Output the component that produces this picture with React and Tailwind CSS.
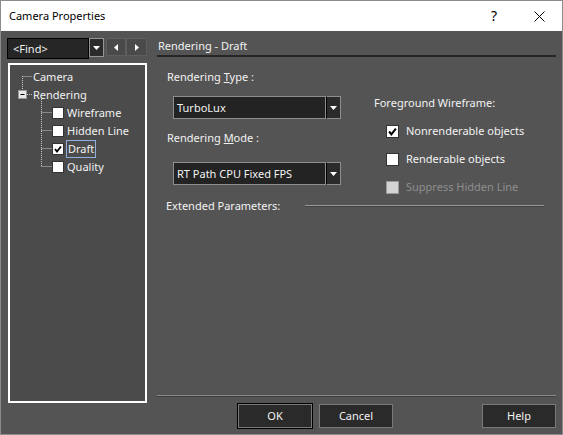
import React from "react";

const font = { fontFamily: "'Noto Sans', 'Open Sans', sans-serif" };

const Check = ({ checked, size = 12, disabled }) => (
  <span
    className={`flex items-center justify-center border ${
      disabled ? "bg-[#d4d4d4] border-[#9a9a9a]" : "bg-white border-[#333]"
    }`}
    style={{ width: size, height: size }}
  >
    {checked && (
      <svg width={size - 4} height={size - 4} viewBox="0 0 8 8">
        <path d="M1 4 L3 6.5 L7 1.5" stroke="#000" strokeWidth="1.8" fill="none" />
      </svg>
    )}
  </span>
);

const DownArrow = () => (
  <svg width="7" height="4" viewBox="0 0 7 4">
    <path d="M0 0 H7 L3.5 4 Z" fill="#fff" />
  </svg>
);

const Combo = ({ value }) => (
  <div className="flex h-[23px] w-[168px] ml-[6px]">
    <div className="flex-1 flex items-center pl-[3px] bg-[#232323] border border-[#8e8e8e] text-[#f2f2f2]">
      {value}
    </div>
    <div className="w-[15px] flex items-center justify-center bg-[#2b2b2b] border border-[#8e8e8e] border-l-black">
      <DownArrow />
    </div>
  </div>
);

const TreeRow = ({ children, indent }) => (
  <div className="h-[18px] flex items-center" style={{ paddingLeft: indent }}>
    {children}
  </div>
);

const Button = ({ label, def }) => (
  <button
    className={`w-[74px] h-[24px] bg-[#2a2a2a] border border-[#7a7a7a] text-[#f2f2f2] ${
      def ? "outline outline-1 outline-black" : ""
    }`}
  >
    {label}
  </button>
);

export default function App() {
  return (
    <div
      className="w-[563px] h-[435px] border border-[#8c8c8c] flex flex-col text-[11px] leading-[16px] select-none"
      style={font}
    >
      {/* Title bar */}
      <div className="h-[30px] bg-white flex items-center pl-[8px] text-[#000] shrink-0">
        <span className="text-[11px]">Camera Properties</span>
        <span className="ml-auto mr-[37px] text-[14px]">?</span>
        <svg width="11" height="11" viewBox="0 0 11 11" className="mr-[17px]">
          <path d="M0.5 0.5 L10.5 10.5 M10.5 0.5 L0.5 10.5" stroke="#000" strokeWidth="1" />
        </svg>
      </div>

      {/* Body */}
      <div className="flex-1 bg-[#545454] flex text-[#f2f2f2]">
        {/* Left column */}
        <div className="ml-[6px] mt-[7px] w-[140px] flex flex-col">
          <div className="flex h-[21px]">
            <div className="w-[82px] flex items-center pl-[5px] bg-[#262626] border border-black">&lt;Find&gt;</div>
            <div className="w-[15px] h-[19px] flex items-center justify-center bg-[#2b2b2b] border border-[#959595]">
              <DownArrow />
            </div>
            <div className="ml-[2px] w-[20px] h-[18px] flex items-center justify-center bg-[#4a4a4a] border border-[#5e5e5e]">
              <svg width="4" height="7" viewBox="0 0 4 7"><path d="M4 0 V7 L0 3.5 Z" fill="#fff" /></svg>
            </div>
            <div className="w-[21px] h-[18px] flex items-center justify-center bg-[#4a4a4a] border border-[#5e5e5e]">
              <svg width="4" height="7" viewBox="0 0 4 7"><path d="M0 0 V7 L4 3.5 Z" fill="#fff" /></svg>
            </div>
          </div>

          <div className="relative mt-[4px] ml-[1px] w-[139px] h-[340px] border-2 border-white bg-[#4b4b4b] pt-[3px]">
            <svg className="absolute left-0 top-0" width="60" height="120">
              <g stroke="#c8c8c8" strokeWidth="1" strokeDasharray="1 1" fill="none">
                <path d="M12.5 11 V25" />
                <path d="M12.5 11.5 H22" />
                <path d="M17 29.5 H22" />
                <path d="M31.5 34 V101" />
                <path d="M31.5 47.5 H42" />
                <path d="M31.5 65.5 H42" />
                <path d="M31.5 83.5 H42" />
                <path d="M31.5 101.5 H42" />
              </g>
              <rect x="8.5" y="25.5" width="8" height="8" fill="#e8e8e8" stroke="#9a9a9a" />
              <path d="M10.5 29.5 H14.5" stroke="#000" />
            </svg>
            <TreeRow indent={23}>Camera</TreeRow>
            <TreeRow indent={23}>Rendering</TreeRow>
            <TreeRow indent={42}>
              <Check />
              <span className="ml-[3px]">Wireframe</span>
            </TreeRow>
            <TreeRow indent={42}>
              <Check />
              <span className="ml-[3px]">Hidden Line</span>
            </TreeRow>
            <TreeRow indent={42}>
              <Check checked />
              <span className="ml-[2px] px-[1px] h-[18px] flex items-center border border-[#8fb0de]">Draft</span>
            </TreeRow>
            <TreeRow indent={42}>
              <Check />
              <span className="ml-[3px]">Quality</span>
            </TreeRow>
          </div>
        </div>

        {/* Right column */}
        <div className="ml-[10px] mr-[6px] flex-1 flex flex-col pb-[6px]">
          <div className="mt-[7px] pl-[1px] h-[16px]">Rendering - Draft</div>
          <div className="mt-[1px] h-[2px] bg-[#262626]" />

          <div className="flex">
            <div className="w-[217px] pl-[10px] flex flex-col">
              <div className="mt-[12px]">
                Rendering <span className="underline">T</span>ype :
              </div>
              <div className="mt-[11px]">
                <Combo value="TurboLux" />
              </div>
              <div className="mt-[11px]">
                Rendering <span className="underline">M</span>ode :
              </div>
              <div className="mt-[16px]">
                <Combo value="RT Path CPU Fixed FPS" />
              </div>
            </div>

            <div className="flex flex-col">
              <div className="mt-[38px]">Foreground Wireframe:</div>
              <div className="mt-[12px] pl-[12px] h-[16px] flex items-center">
                <Check checked size={13} />
                <span className="ml-[7px]">Nonrenderable objects</span>
              </div>
              <div className="mt-[12px] pl-[12px] h-[16px] flex items-center">
                <Check size={13} />
                <span className="ml-[7px]">Renderable objects</span>
              </div>
              <div className="mt-[12px] pl-[12px] h-[16px] flex items-center">
                <Check size={13} disabled />
                <span className="ml-[7px] text-[#8e8e8e]">Suppress Hidden Line</span>
              </div>
            </div>
          </div>

          <div className="mt-[3px] pl-[9px] flex items-center h-[16px]">
            <span className="w-[139px]">Extended Parameters:</span>
            <div className="mr-[12px] flex-1 h-[2px] border-t border-[#9a9a9a] border-b border-b-[#404040]" />
          </div>

          <div className="mt-auto h-[2px] border-t border-[#8a8a8a] border-b border-b-[#3e3e3e]" />
          <div className="mt-[7px] flex">
            <div className="ml-[81px]"><Button label="OK" def /></div>
            <div className="ml-[7px]"><Button label="Cancel" /></div>
            <div className="ml-auto"><Button label="Help" /></div>
          </div>
        </div>
      </div>
    </div>
  );
}
